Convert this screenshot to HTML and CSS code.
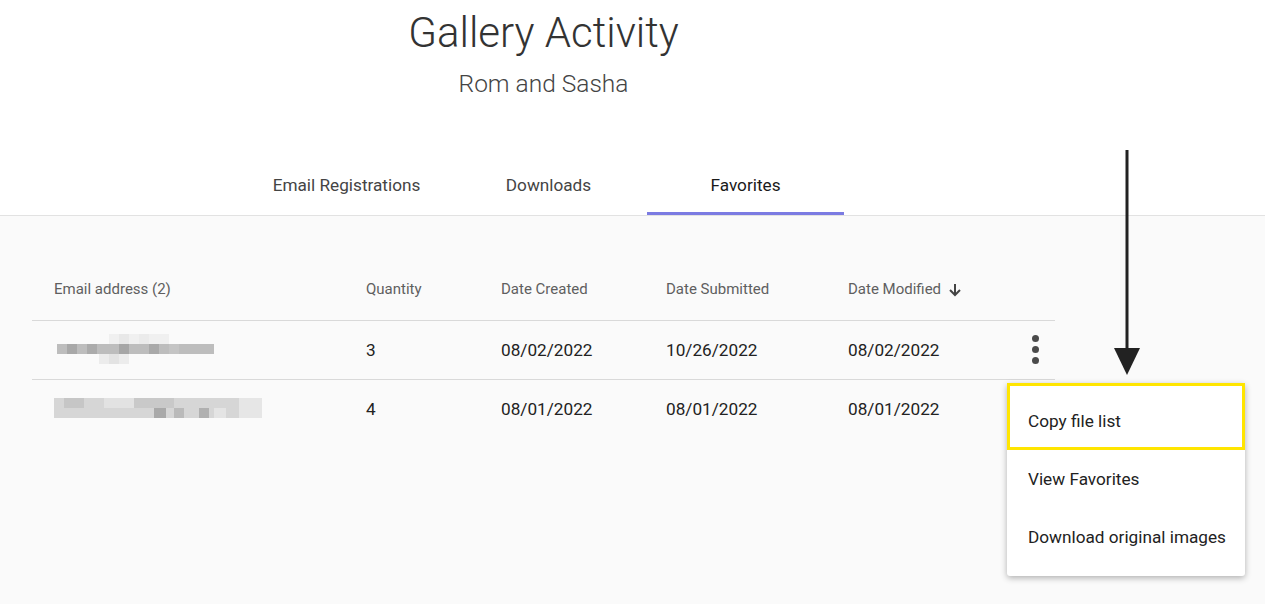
FILE: index.html
```html
<!DOCTYPE html>
<html lang="en">
<head>
    <meta charset="UTF-8">
    <title>Gallery Activity</title>
    <link rel="stylesheet" href="styles.css">
</head>
<body>
    <div class="top">
        <div class="column">
            <h1>Gallery Activity</h1>
            <p class="subtitle">Rom and Sasha</p>
            <div class="tabs">
                <div class="tab wide">Email Registrations</div>
                <div class="tab">Downloads</div>
                <div class="tab active">Favorites</div>
            </div>
        </div>
    </div>

    <div class="content">
        <div class="column">
            <div class="table">
                <div class="row head">
                    <div class="cell first">Email address (2)</div>
                    <div class="cell">Quantity</div>
                    <div class="cell">Date Created</div>
                    <div class="cell">Date Submitted</div>
                    <div class="cell">Date Modified
                        <svg class="sort" width="14" height="14" viewBox="0 0 14 14"><path d="M7 1v11M2 7l5 5 5-5" fill="none" stroke="#444" stroke-width="2"/></svg>
                    </div>
                    <div class="cell"></div>
                </div>
                <div class="row">
                    <div class="cell first">
                        <svg class="blur" width="160" height="32" viewBox="0 0 160 32">
                            <rect x="52" y="0" width="60" height="10" fill="#f0f0f0"/>
                            <rect x="62" y="0" width="10" height="10" fill="#e8e8e8"/>
                            <rect x="82" y="0" width="10" height="10" fill="#ebebeb"/>
                            <rect x="0" y="10" width="157" height="10" fill="#bdbdbd"/>
                            <rect x="10" y="10" width="10" height="10" fill="#a8a8a8"/>
                            <rect x="30" y="10" width="10" height="10" fill="#ababab"/>
                            <rect x="62" y="10" width="10" height="10" fill="#a6a6a6"/>
                            <rect x="92" y="10" width="10" height="10" fill="#a9a9a9"/>
                            <rect x="112" y="10" width="10" height="10" fill="#c4c4c4"/>
                            <rect x="42" y="20" width="30" height="10" fill="#ececec"/>
                            <rect x="52" y="20" width="10" height="10" fill="#e3e3e3"/>
                        </svg>
                    </div>
                    <div class="cell">3</div>
                    <div class="cell">08/02/2022</div>
                    <div class="cell">10/26/2022</div>
                    <div class="cell">08/02/2022</div>
                    <div class="cell kebab"><span></span><span></span><span></span></div>
                </div>
                <div class="row">
                    <div class="cell first">
                        <svg class="blur wide" width="210" height="22" viewBox="0 0 210 22">
                            <rect x="0" y="0" width="208" height="20" fill="#d6d6d6"/>
                            <rect x="10" y="0" width="20" height="10" fill="#c6c6c6"/>
                            <rect x="50" y="0" width="30" height="10" fill="#e2e2e2"/>
                            <rect x="80" y="0" width="40" height="10" fill="#c9c9c9"/>
                            <rect x="100" y="10" width="12" height="10" fill="#a9a9a9"/>
                            <rect x="120" y="10" width="10" height="10" fill="#bababa"/>
                            <rect x="145" y="10" width="10" height="10" fill="#b0b0b0"/>
                            <rect x="160" y="10" width="12" height="10" fill="#e4e4e4"/>
                            <rect x="185" y="0" width="23" height="20" fill="#e6e6e6"/>
                        </svg>
                    </div>
                    <div class="cell">4</div>
                    <div class="cell">08/01/2022</div>
                    <div class="cell">08/01/2022</div>
                    <div class="cell">08/01/2022</div>
                    <div class="cell"></div>
                </div>
            </div>
        </div>
    </div>

    <svg class="pointer" width="30" height="226" viewBox="0 0 30 226">
        <rect x="13.5" y="0" width="3" height="200" fill="#222"/>
        <path d="M2 198h26L15 225z" fill="#222"/>
    </svg>

    <div class="menu">
        <div class="menu-item highlight">Copy file list</div>
        <div class="menu-item">View Favorites</div>
        <div class="menu-item">Download original images</div>
    </div>
</body>
</html>
```

FILE: styles.css
```css
body {
    margin: 0;
    font-family: Roboto, "Liberation Sans", sans-serif;
    background: #fafafa;
    color: #222;
    min-height: 604px;
}

.column {
    width: 1087px;
}

.top {
    background: #fff;
    border-bottom: 1px solid #e2e2e2;
}

h1 {
    margin: 0;
    padding-top: 9px;
    text-align: center;
    font-size: 42px;
    font-weight: 300;
    line-height: 48px;
    color: #333;
}

.subtitle {
    margin: 13px 0 0;
    text-align: center;
    font-size: 24.5px;
    font-weight: 300;
    line-height: 28px;
    color: #444;
}

.tabs {
    display: flex;
    justify-content: center;
    margin-top: 62px;
    padding-left: 10px;
}

.tab {
    box-sizing: border-box;
    width: 197px;
    text-align: center;
    font-size: 17.2px;
    font-weight: 400;
    color: #444;
    padding: 15px 0 17px;
    border-bottom: 3px solid transparent;
}

.tab.wide {
    padding-right: 10px;
}

.tab.active {
    color: #1a1a1a;
    border-bottom-color: #7b7be2;
}

.table {
    margin: 42px 32px 0;
}

.row {
    display: grid;
    grid-template-columns: 334px 135px 165px 182px 162px 45px;
    align-items: center;
    height: 58px;
    border-bottom: 1px solid #d9d9d9;
    font-size: 17.2px;
    color: #222;
}

.row:last-child {
    border-bottom: none;
}

.row.head {
    height: 62px;
    font-size: 15px;
    color: #5f5f5f;
}

.cell.first {
    padding-left: 22px;
}

.sort {
    vertical-align: -3px;
    margin-left: 3px;
}

.blur {
    display: block;
    margin-left: 3px;
}

.blur.wide {
    margin-left: 0;
}

.kebab {
    display: flex;
    flex-direction: column;
    align-items: center;
    gap: 4px;
    padding-left: 6px;
    margin-top: -2px;
}

.kebab span {
    width: 7px;
    height: 7px;
    border-radius: 50%;
    background: #4a4a4a;
}

.pointer {
    position: absolute;
    left: 1112px;
    top: 150px;
}

.menu {
    position: absolute;
    left: 1007px;
    top: 383px;
    width: 238px;
    padding-bottom: 10px;
    background: #fff;
    border-radius: 3px;
    box-shadow: 0 2px 6px rgba(0, 0, 0, 0.3);
}

.menu-item {
    height: 58px;
    line-height: 58px;
    padding-left: 21px;
    font-size: 17.2px;
    color: #222;
}

.menu-item.highlight {
    height: 55px;
    padding-top: 6px;
    padding-left: 18px;
    border: 3px solid #ffe500;
}
```
